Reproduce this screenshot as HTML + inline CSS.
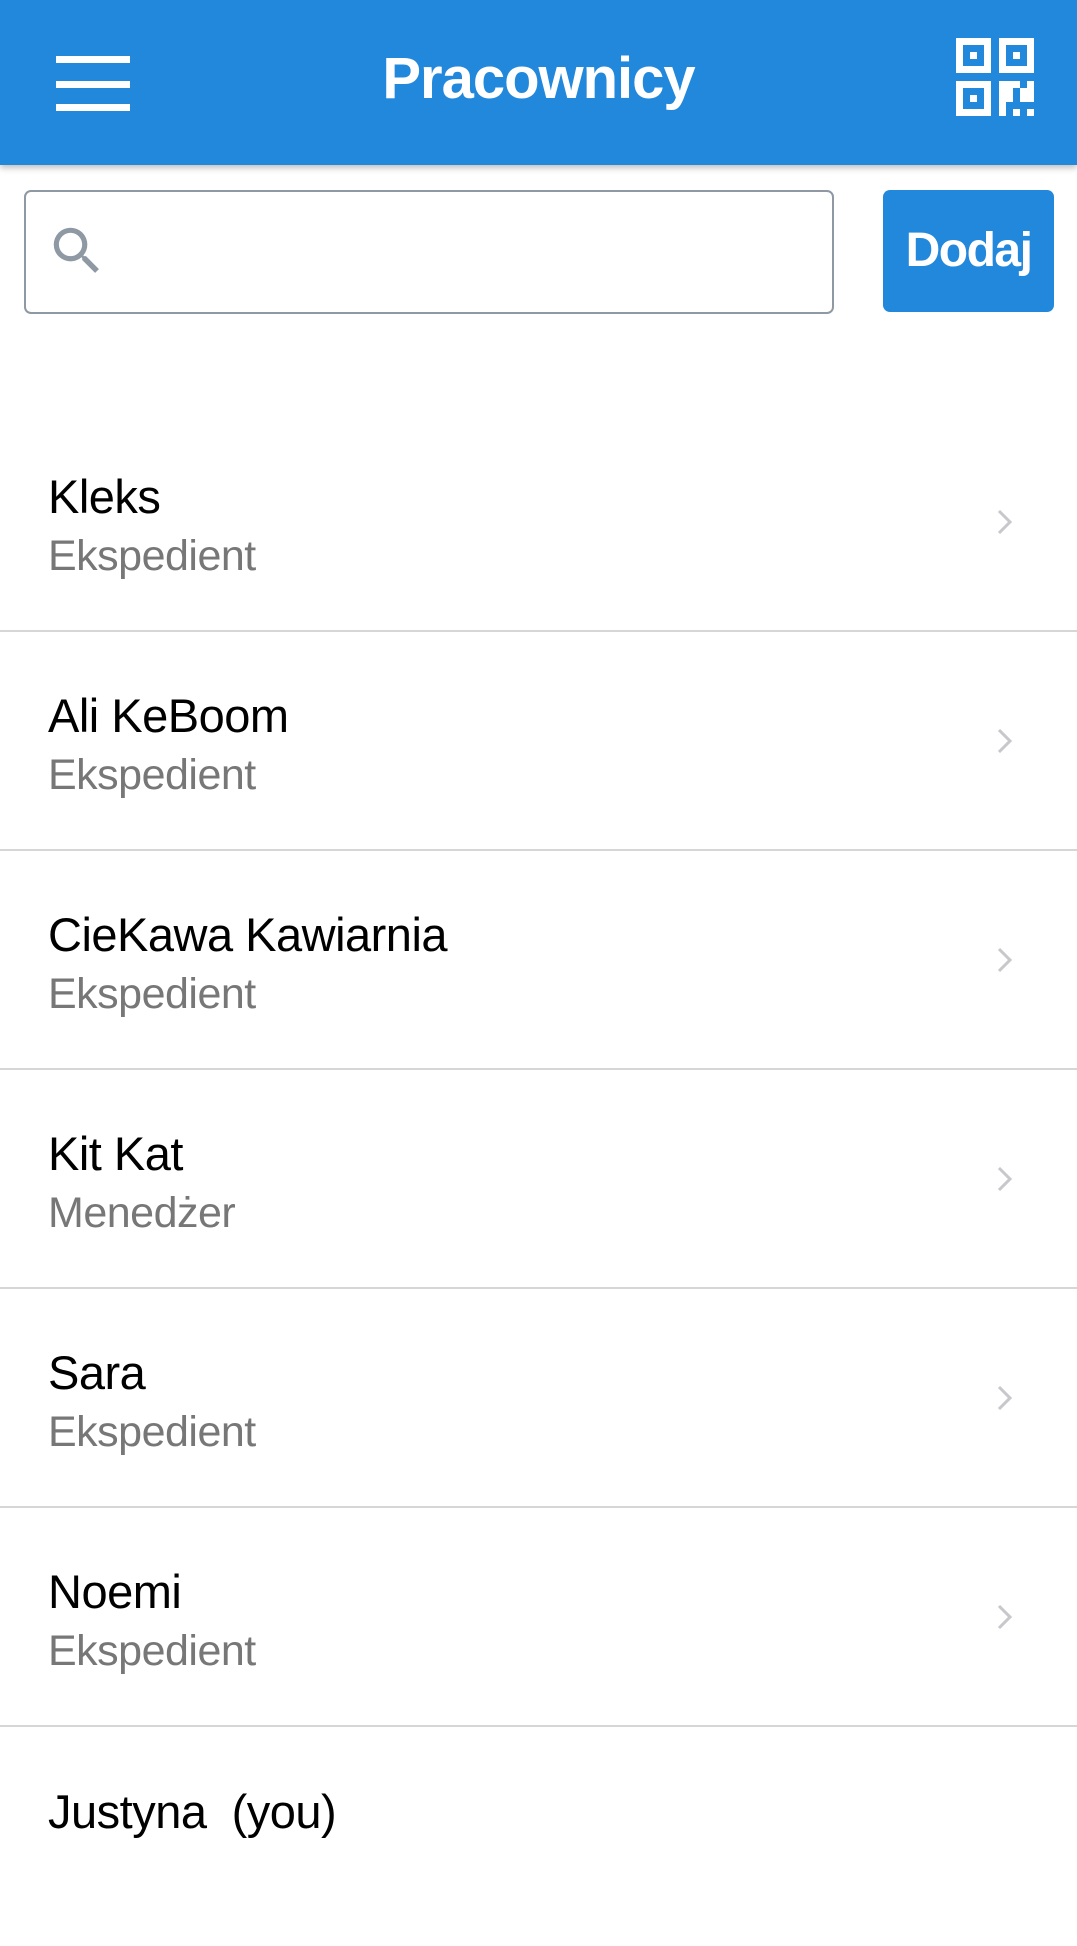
<!DOCTYPE html>
<html><head><meta charset="utf-8"><style>
*{margin:0;padding:0;box-sizing:border-box}
body{width:1077px;height:1844px;overflow:hidden;background:#fff;font-family:"Liberation Sans",Arial,sans-serif;position:relative}
.hdr{position:absolute;left:0;top:0;width:1077px;height:165px;background:#2288dc;box-shadow:0 3px 6px rgba(0,0,0,.25);z-index:2}
.bar{position:absolute;left:56px;width:74px;height:7px;background:#fff}
.title{position:absolute;left:0;width:1077px;top:50px;text-align:center;color:#fff;font-weight:bold;font-size:58px;line-height:1;letter-spacing:-1px}
.search{position:absolute;left:24px;top:190px;width:810px;height:124px;border:2px solid #8e99a4;border-radius:7px}
.btn{position:absolute;left:883px;top:190px;width:171px;height:122px;background:#2288dc;border-radius:7px;color:#fff;font-size:48px;font-weight:bold;line-height:122px;text-align:center;letter-spacing:-1.5px}
.row{position:absolute;left:0;width:1077px;height:219px;border-bottom:2px solid #d6d6d6}
.nm{position:absolute;left:48px;font-size:47px;line-height:1;color:#000;letter-spacing:-.5px}
.sb{position:absolute;left:48px;font-size:43px;line-height:1;color:#777;letter-spacing:-.5px}
.chev{position:absolute;left:996px}
</style></head><body>
<div class="hdr">
<div class="bar" style="top:56px"></div><div class="bar" style="top:81px"></div><div class="bar" style="top:104px"></div>
<div class="title">Pracownicy</div>
<svg style="position:absolute;left:956px;top:38px" width="80" height="80" viewBox="0 0 80 80" fill="#fff">
<path fill-rule="evenodd" d="M0 0h35v35H0zM7 7v21h21V7z"/><rect x="14" y="14" width="7" height="7"/>
<path fill-rule="evenodd" d="M43 0h35v35H43zM50 7v21h21V7z"/><rect x="57" y="14" width="7" height="7"/>
<path fill-rule="evenodd" d="M0 43h35v35H0zM7 50v21h21V50z"/><rect x="14" y="57" width="7" height="7"/>
<path d="M43 43h21v7h-7v14h-7v14h-7z"/><rect x="71" y="43" width="7" height="21"/><rect x="64" y="50" width="7" height="14"/><rect x="57" y="71" width="7" height="7"/><rect x="71" y="71" width="7" height="7"/>
</svg>
</div>
<div class="search">
<svg style="position:absolute;left:20px;top:28px" width="62" height="62" viewBox="0 0 24 24"><path fill="#8e99a4" d="M15.5 14h-.79l-.28-.27A6.47 6.470 0 0 0 16 9.5 6.5 6.5 0 1 0 9.5 16c1.61 0 3.09-.59 4.23-1.57l.27.28v.79l5 4.99L20.490 19l-4.99-5zm-6 0C7.01 14 5 11.99 5 9.5S7.01 5 9.5 5 14 7.01 14 9.5 11.99 14 9.5 14z"/></svg>
</div>
<div class="btn">Dodaj</div>

<div class="row" style="top:413px"><div class="nm" style="top:60px">Kleks</div><div class="sb" style="top:122px">Ekspedient</div><svg class="chev" style="top:95px" width="18" height="28" viewBox="0 0 18 28"><path d="M3 3l11 11L3 25" stroke="#c7c7cc" stroke-width="3" fill="none"/></svg></div>
<div class="row" style="top:632px"><div class="nm" style="top:60px">Ali KeBoom</div><div class="sb" style="top:122px">Ekspedient</div><svg class="chev" style="top:95px" width="18" height="28" viewBox="0 0 18 28"><path d="M3 3l11 11L3 25" stroke="#c7c7cc" stroke-width="3" fill="none"/></svg></div>
<div class="row" style="top:851px"><div class="nm" style="top:60px">CieKawa Kawiarnia</div><div class="sb" style="top:122px">Ekspedient</div><svg class="chev" style="top:95px" width="18" height="28" viewBox="0 0 18 28"><path d="M3 3l11 11L3 25" stroke="#c7c7cc" stroke-width="3" fill="none"/></svg></div>
<div class="row" style="top:1070px"><div class="nm" style="top:60px">Kit Kat</div><div class="sb" style="top:122px">Menedżer</div><svg class="chev" style="top:95px" width="18" height="28" viewBox="0 0 18 28"><path d="M3 3l11 11L3 25" stroke="#c7c7cc" stroke-width="3" fill="none"/></svg></div>
<div class="row" style="top:1289px"><div class="nm" style="top:60px">Sara</div><div class="sb" style="top:122px">Ekspedient</div><svg class="chev" style="top:95px" width="18" height="28" viewBox="0 0 18 28"><path d="M3 3l11 11L3 25" stroke="#c7c7cc" stroke-width="3" fill="none"/></svg></div>
<div class="row" style="top:1508px"><div class="nm" style="top:60px">Noemi</div><div class="sb" style="top:122px">Ekspedient</div><svg class="chev" style="top:95px" width="18" height="28" viewBox="0 0 18 28"><path d="M3 3l11 11L3 25" stroke="#c7c7cc" stroke-width="3" fill="none"/></svg></div>
<div class="row" style="top:1727px;border:none"><div class="nm" style="top:61px">Justyna&nbsp; (you)</div></div>
</body></html>
